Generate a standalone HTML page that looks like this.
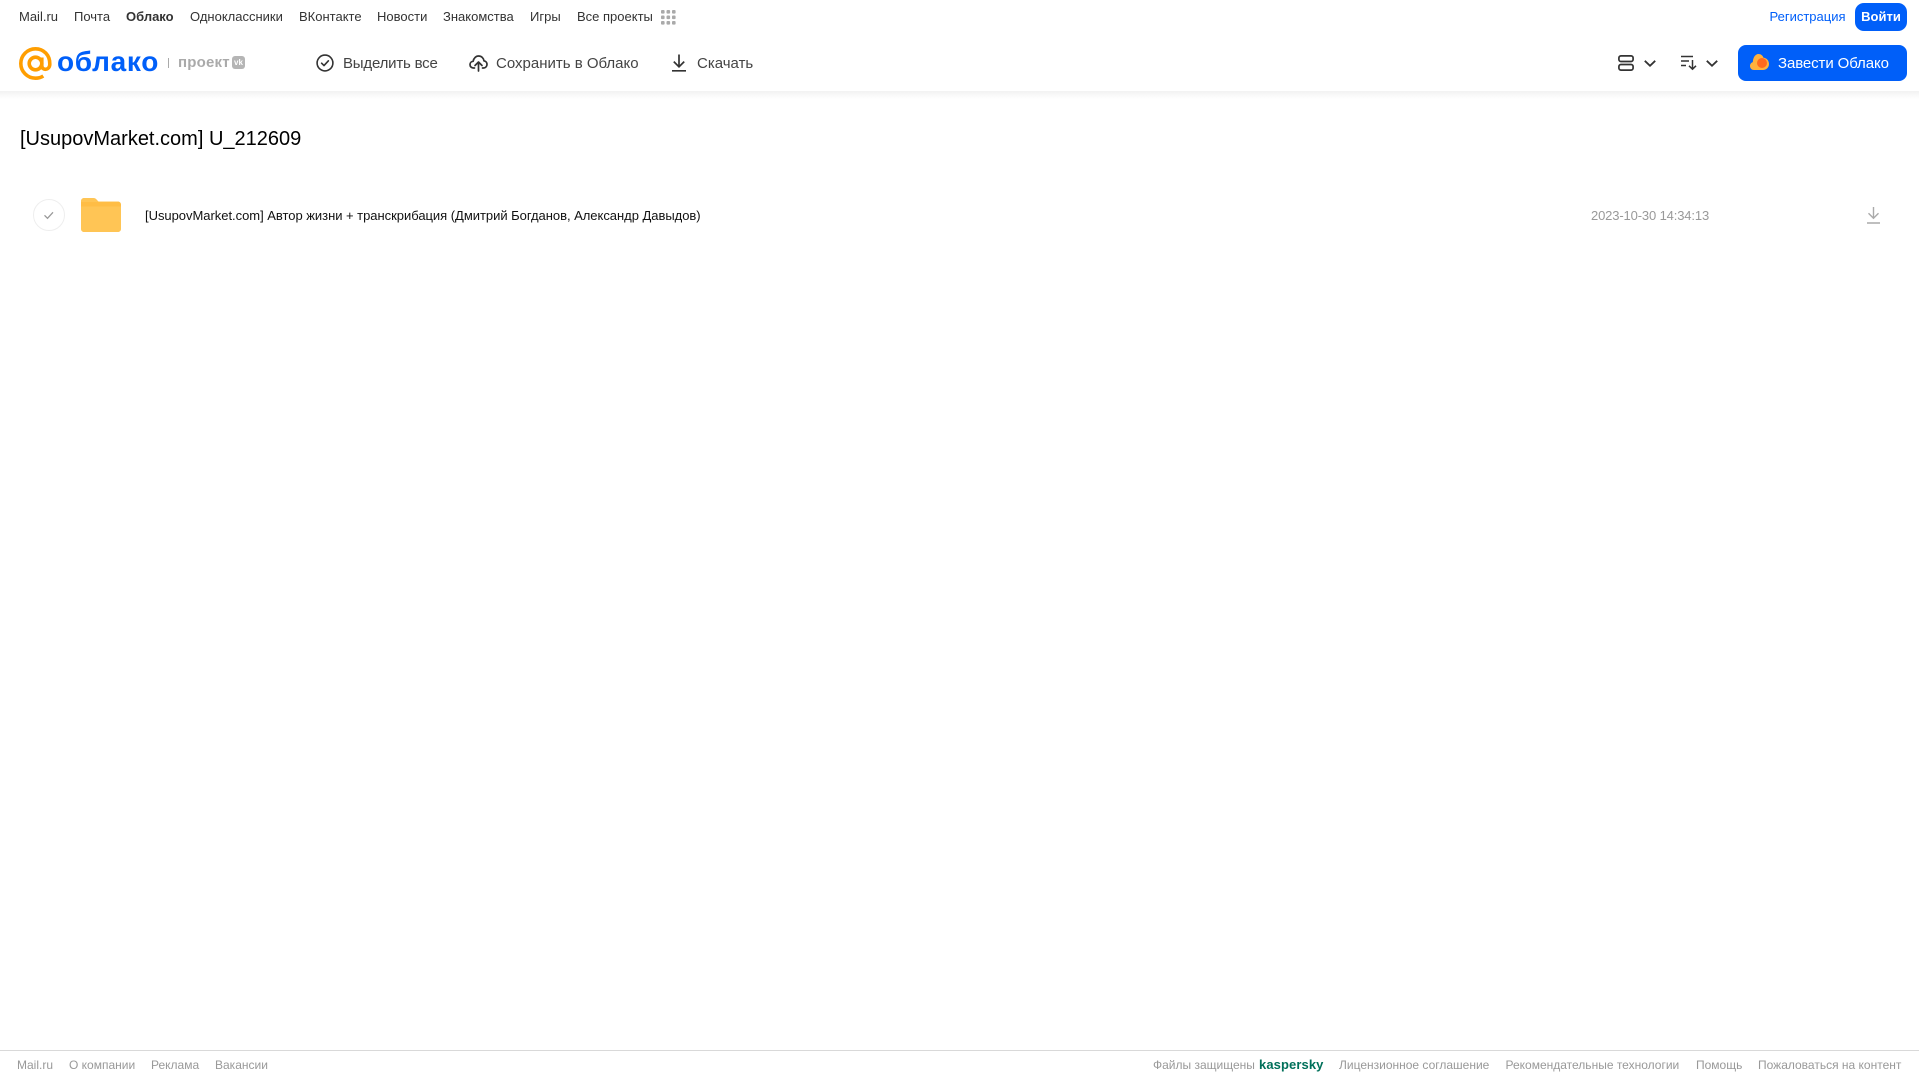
<!DOCTYPE html>
<html lang="ru"><head><meta charset="utf-8"><title>Облако</title>
<style>
html,body{margin:0;padding:0;background:#fff}
body{position:relative;width:1919px;height:1079px;overflow:hidden;font-family:"Liberation Sans",Arial,sans-serif}
.t{position:absolute;white-space:nowrap;line-height:20px;height:20px}
.n{font-size:13px;color:#333;top:7px}
.a{font-size:15px;color:#444;top:53.500px;letter-spacing:0}
.f{font-size:12px;color:#999;top:1055px}
svg{position:absolute;overflow:visible}
</style></head><body>
<div style="position:absolute;left:0;top:91px;width:1919px;height:8px;background:linear-gradient(#f2f2f2,#fff)"></div>
<span class="t n" style="left:19px">Mail.ru</span>
<span class="t n" style="left:74px">Почта</span>
<span class="t n" style="left:126px;font-weight:700">Облако</span>
<span class="t n" style="left:190px">Одноклассники</span>
<span class="t n" style="left:299px">ВКонтакте</span>
<span class="t n" style="left:377px">Новости</span>
<span class="t n" style="left:443px">Знакомства</span>
<span class="t n" style="left:530px">Игры</span>
<span class="t n" style="left:577px">Все проекты</span>
<svg style="left:661px;top:10px" width="15" height="15" fill="#aaa"><rect x="0" y="0" width="3.600" height="3.600" rx="1"/><rect x="5.500" y="0" width="3.600" height="3.600" rx="1"/><rect x="11" y="0" width="3.600" height="3.600" rx="1"/><rect x="0" y="5.500" width="3.600" height="3.600" rx="1"/><rect x="5.500" y="5.500" width="3.600" height="3.600" rx="1"/><rect x="11" y="5.500" width="3.600" height="3.600" rx="1"/><rect x="0" y="11" width="3.600" height="3.600" rx="1"/><rect x="5.500" y="11" width="3.600" height="3.600" rx="1"/><rect x="11" y="11" width="3.600" height="3.600" rx="1"/></svg>

<svg style="left:19px;top:47px" width="33" height="33" viewBox="0 0 33 33" fill="none" stroke="#ff9e00" stroke-width="3.600"><circle cx="16.500" cy="16.500" r="6.300"/><path d="M22.800 10.500v8.200c0 5 7.900 5 8-1.600C31 8 24.500 1.800 16.500 1.800 8.400 1.800 1.800 8.400 1.800 16.500S8.400 31.200 16.500 31.200c3 0 5.600-.8 7.800-2.200"/></svg>
<span class="t" style="left:57px;top:44px;height:36px;line-height:36px;font-size:28px;font-weight:700;color:#005ff9;letter-spacing:.7px">облако</span>
<div style="position:absolute;left:168px;top:58px;width:1px;height:10px;background:#aaa"></div>
<span class="t" style="left:178px;top:53px;font-size:15px;font-weight:700;color:#aaa;letter-spacing:.2px">проект</span>
<div style="position:absolute;left:232px;top:56px;width:13px;height:13px;border-radius:3px;background:#b5b5b5;color:#fff;font-size:8px;font-weight:700;line-height:13px;text-align:center">vk</div>

<svg style="left:316px;top:54px" width="18" height="18" viewBox="0 0 18 18" fill="none" stroke="#333" stroke-width="1.600"><circle cx="9" cy="9" r="7.900"/><path d="M5.600 9.200l2.400 2.400 4.400-4.800" stroke-linecap="round" stroke-linejoin="round"/></svg>
<span class="t a" style="left:343px;letter-spacing:-.2px">Выделить все</span>
<svg style="left:469px;top:54px" width="19" height="18" viewBox="0 0 19 18" fill="none" stroke="#333" stroke-width="1.700" stroke-linecap="round" stroke-linejoin="round"><path d="M5.500 14H4.400C2.400 14 1 12.500 1 10.600c0-1.800 1.400-3.200 3.100-3.300C4.700 4.100 6.900 2 9.600 2c2.800 0 5 2.100 5.400 4.900 1.800.2 3 1.700 3 3.500 0 2-1.500 3.600-3.500 3.600h-1"/><path d="M9.500 17V8.500M6 11.500l3.500-3.500 3.500 3.500"/></svg>
<span class="t a" style="left:496px">Сохранить в Облако</span>
<svg style="left:672px;top:54px" width="14" height="18" viewBox="0 0 14 18" fill="none" stroke="#333" stroke-width="1.700"><path d="M7 0.500V12.500M1.800 7.600L7 12.800l5.200-5.200M0 16.800h14"/></svg>
<span class="t a" style="left:697px">Скачать</span>

<span class="t n" style="left:1769.500px;color:#005ff9">Регистрация</span>
<div style="position:absolute;left:1855px;top:3px;width:52px;height:28px;border-radius:9px;background:#005ff9;color:#fff;font-size:13px;font-weight:700;line-height:28px;text-align:center">Войти</div>
<svg style="left:1618px;top:55px" width="16" height="16" viewBox="0 0 16 16" fill="none" stroke="#333" stroke-width="1.700"><rect x=".9" y=".9" width="14.200" height="5.600" rx="2"/><rect x=".9" y="9.500" width="14.200" height="5.600" rx="2"/></svg>
<svg style="left:1644px;top:60px" width="12" height="7" viewBox="0 0 12 7" fill="none" stroke="#333" stroke-width="1.800"><path d="M.8.8L6 5.800 11.200.8"/></svg>
<svg style="left:1681px;top:55px" width="16" height="15" viewBox="0 0 16 15" fill="none" stroke="#333" stroke-width="1.500"><path d="M0 1.500h12M0 6h8M0 10.500h5M11.500 5v9M8 10.800l3.500 3.400 3.500-3.400"/></svg>
<svg style="left:1706px;top:60px" width="12" height="7" viewBox="0 0 12 7" fill="none" stroke="#333" stroke-width="1.800"><path d="M.8.8L6 5.800 11.200.8"/></svg>
<div style="position:absolute;left:1738px;top:45px;width:169px;height:36px;border-radius:8px;background:#005ff9"></div>
<svg style="left:1750px;top:54px" width="19" height="16" viewBox="0 0 19 16"><path d="M4 16C1.800 16 0 14.300 0 12c0-2 1.300-3.400 2.800-3.900C3 4 5 0 8.500 0c2.500 0 4.300 1.600 5 3.800 3 .2 5.500 2.800 5.500 6.200 0 3.400-2.600 6-6 6z" fill="#ffb13d"/><circle cx="12" cy="9" r="5" fill="#ff6a1f"/></svg>
<span class="t a" style="left:1778px;color:#fff;letter-spacing:-.1px">Завести Облако</span>

<span class="t" style="left:20px;top:126px;height:26px;line-height:26px;font-size:20px;color:#000">[UsupovMarket.com] U_212609</span>
<svg style="left:33px;top:199px" width="32" height="32" viewBox="0 0 32 32" fill="none"><circle cx="16" cy="16" r="15.500" stroke="#eee"/><path d="M11.500 16.300l3 3 5.500-6" stroke="#999" stroke-width="1.300"/></svg>
<svg style="left:81px;top:198px" width="40" height="34" viewBox="0 0 40 34"><path d="M3 0h9.500c1.500 0 2.500.8 3.500 2l1.500 1.500H37c1.700 0 3 1.300 3 3V31c0 1.700-1.300 3-3 3H3c-1.700 0-3-1.300-3-3V3c0-1.700 1.300-3 3-3z" fill="#ffc555"/><path d="M0 8.500h40V7c0-1.700-1.300-3-3-3H0z" fill="#ffbd45"/></svg>
<span class="t" style="left:145px;top:206px;font-size:13px;color:#111;letter-spacing:-.03px">[UsupovMarket.com] Автор жизни + транскрибация (Дмитрий Богданов, Александр Давыдов)</span>
<span class="t" style="left:1591px;top:206px;font-size:13px;color:#999;letter-spacing:-.14px">2023-10-30 14:34:13</span>
<svg style="left:1867px;top:207px" width="13" height="17" viewBox="0 0 13 17" fill="none" stroke="#aaa" stroke-width="1.400"><path d="M6.500 0v11M1.500 6.200l5 5 5-5M0 16h13"/></svg>

<div style="position:absolute;left:0;top:1050px;width:1919px;height:1px;background:#d9d9d9"></div>
<span class="t f" style="left:17px">Mail.ru</span>
<span class="t f" style="left:69px">О компании</span>
<span class="t f" style="left:151px">Реклама</span>
<span class="t f" style="left:215px">Вакансии</span>
<span class="t f" style="left:1153px">Файлы защищены</span>
<span class="t f" style="left:1259px;font-size:13px;font-weight:700;color:#00705a;letter-spacing:.1px">kaspersky</span>
<span class="t f" style="left:1339px">Лицензионное соглашение</span>
<span class="t f" style="left:1505.500px">Рекомендательные технологии</span>
<span class="t f" style="left:1696px">Помощь</span>
<span class="t f" style="left:1758px">Пожаловаться на контент</span>
</body></html>
